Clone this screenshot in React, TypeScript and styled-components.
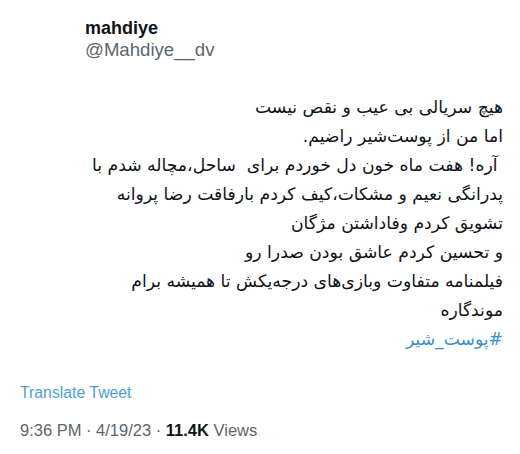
import React from "react";
import styled, { createGlobalStyle } from "styled-components";

const Global = createGlobalStyle`
  html, body { margin: 0; padding: 0; background: #ffffff; }
  body { font-family: "Liberation Sans", Arial, sans-serif; }
`;

const Tweet = styled.article`
  width: 520px;
  height: 454px;
  box-sizing: border-box;
  padding: 0 17px 0 20px;
  display: flex;
  flex-direction: column;
  background: #fff;
  overflow: hidden;
`;

const Header = styled.header`
  display: flex;
  flex-direction: column;
  padding: 17px 0 0 65px;
`;

const Name = styled.div`
  font-weight: 700;
  font-size: 18px;
  line-height: 22px;
  color: #0f1419;
`;

const Handle = styled.div`
  font-size: 18.6px;
  line-height: 22px;
  color: #5b6670;
`;

const Body = styled.div`
  direction: rtl;
  text-align: right;
  margin-top: 32px;
  font-family: "DejaVu Sans", "Noto Sans", sans-serif;
  font-size: 17.2px;
  line-height: 29px;
  color: #0f1419;
`;

const Line = styled.div`
  white-space: pre;
`;

const Hashtag = styled.div`
  color: #3a8fcf;
`;

const Translate = styled.div`
  margin-top: 29px;
  font-size: 15.8px;
  line-height: 20px;
  color: #4f9fd3;
`;

const Meta = styled.div`
  margin-top: 17px;
  font-size: 16.5px;
  line-height: 20px;
  color: #5b6670;
`;

const Strong = styled.span`
  font-weight: 700;
  color: #0f1419;
`;

const Divider = styled.hr`
  margin: 20px 0 0;
  border: 0;
  border-top: 1px solid #f1f3f4;
`;

const lines = [
  "هیچ سریالی بی عیب و نقص نیست",
  "اما من از پوست‌شیر راضیم.",
  " آره! هفت ماه خون دل خوردم برای  ساحل،مچاله شدم با",
  "پدرانگی نعیم و مشکات،کیف کردم بارفاقت رضا پروانه",
  "تشویق کردم وفاداشتن مژگان",
  "و تحسین کردم عاشق بودن صدرا رو",
  "فیلمنامه متفاوت وبازی‌های درجه‌یکش تا همیشه برام",
  "موندگاره",
];

export default function App() {
  return (
    <>
      <Global />
      <Tweet>
        <Header>
          <Name>mahdiye</Name>
          <Handle>@Mahdiye__dv</Handle>
        </Header>
        <Body>
          {lines.map((l, i) => (
            <Line key={i}>{l}</Line>
          ))}
          <Hashtag>#پوست_شیر</Hashtag>
        </Body>
        <Translate>Translate Tweet</Translate>
        <Meta>
          9:36 PM · 4/19/23 · <Strong>11.4K</Strong> Views
        </Meta>
        <Divider />
      </Tweet>
    </>
  );
}
